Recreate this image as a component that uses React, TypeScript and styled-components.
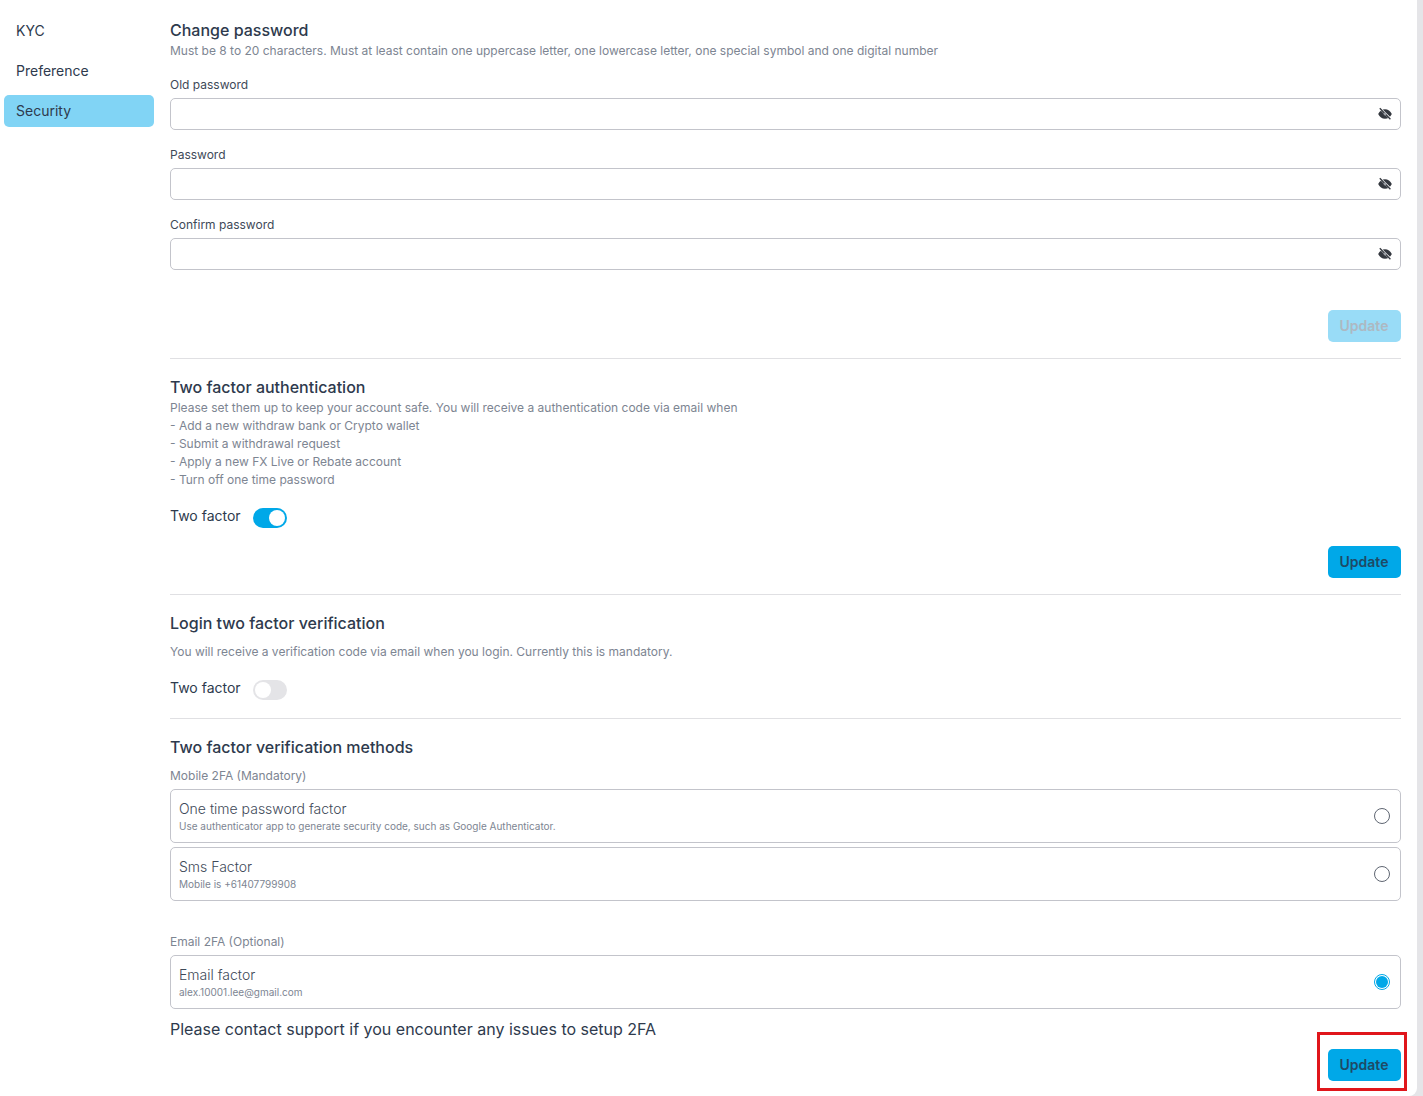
import React from 'react';
import styled, { createGlobalStyle } from 'styled-components';

const GlobalStyle = createGlobalStyle`
  * {
    box-sizing: border-box;
  }

  body {
    margin: 0;
    background: #e5e5e8;
    font-family: Inter, "Liberation Sans", sans-serif;
    color: #2e3a4d;
  }
`;

const Page = styled.div`
  width: 1417px;
  height: 1096px;
  background: white;
  border-radius: 0 0 8px 0;
  display: flex;
  overflow: hidden;
`;

const Sidebar = styled.nav`
  width: 170px;
  flex-shrink: 0;
  padding: 15px 16px 0 4px;
  display: flex;
  flex-flow: column;
  gap: 8px;
`;

const NavItem = styled.div<{ active?: boolean }>`
  height: 32px;
  padding: 0 12px 2px;
  display: flex;
  align-items: center;
  font-size: 14px;
  border-radius: 5px;
  background: ${props => (props.active ? '#81d4f5' : 'transparent')};
`;

const Main = styled.main`
  width: 1231px;
  padding-top: 20px;
`;

const Section = styled.section<{ pad: number }>`
  padding-bottom: ${props => props.pad}px;
  margin-bottom: 18px;
  border-bottom: 1px solid #e0e0e3;
`;

const LastSection = styled.section``;

const Title = styled.h2`
  margin: 0;
  font-size: 16px;
  line-height: 20px;
  font-weight: 500;
  color: #2e3a4d;
`;

const Hint = styled.p<{ top?: number; bottom?: number }>`
  margin: ${props => props.top || 0}px 0 ${props => props.bottom || 0}px;
  font-size: 12px;
  line-height: 18px;
  color: #7d8592;
  white-space: pre-line;
`;

const Field = styled.div`
  margin-bottom: 18px;
`;

const Label = styled.label`
  display: block;
  font-size: 12px;
  line-height: 14px;
  margin-bottom: 6px;
  color: #3e4958;
`;

const InputWrap = styled.div`
  height: 32px;
  border: 1px solid #c3c4cb;
  border-radius: 5px;
  display: flex;
  align-items: center;
  justify-content: flex-end;
  padding-right: 8px;
`;

const ButtonRow = styled.div<{ top: number }>`
  display: flex;
  justify-content: flex-end;
  margin-top: ${props => props.top}px;
`;

const Button = styled.button<{ disabled?: boolean }>`
  width: 73px;
  height: 32px;
  border: 0;
  border-radius: 5px;
  padding: 0 1px 2px 0;
  font-family: inherit;
  font-size: 14px;
  font-weight: 600;
  background: ${props => (props.disabled ? '#99dcf7' : '#00a8e8')};
  color: ${props => (props.disabled ? '#adb8c2' : '#1e4a66')};
`;

const ToggleRow = styled.div<{ top: number }>`
  display: flex;
  align-items: center;
  gap: 12px;
  height: 20px;
  margin-top: ${props => props.top}px;
  font-size: 14px;
`;

const Toggle = styled.span<{ on?: boolean }>`
  position: relative;
  width: 34px;
  height: 20px;
  border-radius: 10px;
  background: ${props => (props.on ? '#00a8e8' : '#e4e4e7')};
  margin-top: 6px;

  &::after {
    content: '';
    position: absolute;
    top: 2px;
    left: ${props => (props.on ? '16px' : '2px')};
    width: 16px;
    height: 16px;
    border-radius: 50%;
    background: white;
  }
`;

const GroupLabel = styled.div<{ top: number }>`
  margin-top: ${props => props.top}px;
  margin-bottom: 4px;
  font-size: 12px;
  line-height: 18px;
  color: #7d8592;
`;

const FactorCard = styled.div`
  height: 54px;
  margin-bottom: 4px;
  padding: 2px 8px 0;
  border: 1px solid #c3c4cb;
  border-radius: 5px;
  display: flex;
  align-items: center;
  justify-content: space-between;
`;

const FactorName = styled.div`
  margin: -1px 0 1px;
  font-size: 14px;
  font-weight: 300;
  line-height: 18px;
  color: #3e4958;
`;

const FactorInfo = styled.div`
  font-size: 10px;
  line-height: 15px;
  color: #7d8592;
`;

const Radio = styled.span<{ checked?: boolean }>`
  width: 16px;
  height: 16px;
  margin: -2px 2px 0 0;
  border-radius: 50%;
  border: 1px solid ${props => (props.checked ? '#00a8e8' : '#5f6672')};
  display: flex;
  align-items: center;
  justify-content: center;

  &::after {
    content: '';
    width: 12px;
    height: 12px;
    border-radius: 50%;
    background: ${props => (props.checked ? '#00a8e8' : 'transparent')};
  }
`;

const SupportNote = styled.p`
  margin: 10px 0 0;
  font-size: 16px;
  line-height: 20px;
  color: #2e3a4d;
`;

const Highlight = styled.div`
  position: relative;

  &::before {
    content: '';
    position: absolute;
    top: -17px;
    left: -11px;
    right: -6px;
    bottom: -10px;
    border: 3px solid #e0161b;
  }
`;

const EyeOff = () => (
  <svg width="14" height="14" viewBox="0 0 14 14" fill="none">
    <path
      d="M0.2 7C1.6 3.9 4.1 2.2 7 2.2S12.4 3.9 13.8 7C12.4 10.1 9.9 11.8 7 11.8S1.6 10.1 0.2 7Z"
      fill="#34383f"
    />
    <path d="M2.2 1.4L12.2 11.6" stroke="white" strokeWidth="2.2" />
    <path d="M1.8 1.2L12.4 12.2" stroke="#34383f" strokeWidth="1.3" />
    <circle cx="7" cy="7" r="1.4" fill="#9a9da3" />
  </svg>
);

const passwordFields = ['Old password', 'Password', 'Confirm password'];

const hintLines = `Please set them up to keep your account safe. You will receive a authentication code via email when
- Add a new withdraw bank or Crypto wallet
- Submit a withdrawal request
- Apply a new FX Live or Rebate account
- Turn off one time password`;

const App: React.FC = () => (
  <React.Fragment>
    <GlobalStyle />
    <Page>
      <Sidebar>
        <NavItem>KYC</NavItem>
        <NavItem>Preference</NavItem>
        <NavItem active>Security</NavItem>
      </Sidebar>
      <Main>
        <Section pad={16}>
          <Title>Change password</Title>
          <Hint top={2} bottom={18}>
            Must be 8 to 20 characters. Must at least contain one uppercase letter, one lowercase
            letter, one special symbol and one digital number
          </Hint>
          {passwordFields.map(name => (
            <Field key={name}>
              <Label>{name}</Label>
              <InputWrap>
                <EyeOff />
              </InputWrap>
            </Field>
          ))}
          <ButtonRow top={40}>
            <Button disabled>Update</Button>
          </ButtonRow>
        </Section>

        <Section pad={16}>
          <Title>Two factor authentication</Title>
          <Hint top={2}>{hintLines}</Hint>
          <ToggleRow top={16}>
            Two factor
            <Toggle on />
          </ToggleRow>
          <ButtonRow top={21}>
            <Button>Update</Button>
          </ButtonRow>
        </Section>

        <Section pad={21}>
          <Title>Login two factor verification</Title>
          <Hint top={10}>
            You will receive a verification code via email when you login. Currently this is
            mandatory.
          </Hint>
          <ToggleRow top={16}>
            Two factor
            <Toggle />
          </ToggleRow>
        </Section>

        <LastSection>
          <Title>Two factor verification methods</Title>
          <GroupLabel top={10}>Mobile 2FA (Mandatory)</GroupLabel>
          <FactorCard>
            <div>
              <FactorName>One time password factor</FactorName>
              <FactorInfo>
                Use authenticator app to generate security code, such as Google Authenticator.
              </FactorInfo>
            </div>
            <Radio />
          </FactorCard>
          <FactorCard>
            <div>
              <FactorName>Sms Factor</FactorName>
              <FactorInfo>Mobile is +61407799908</FactorInfo>
            </div>
            <Radio />
          </FactorCard>
          <GroupLabel top={32}>Email 2FA (Optional)</GroupLabel>
          <FactorCard>
            <div>
              <FactorName>Email factor</FactorName>
              <FactorInfo>alex.10001.lee@gmail.com</FactorInfo>
            </div>
            <Radio checked />
          </FactorCard>
          <SupportNote>Please contact support if you encounter any issues to setup 2FA</SupportNote>
          <ButtonRow top={10}>
            <Highlight>
              <Button>Update</Button>
            </Highlight>
          </ButtonRow>
        </LastSection>
      </Main>
    </Page>
  </React.Fragment>
);

export default App;
